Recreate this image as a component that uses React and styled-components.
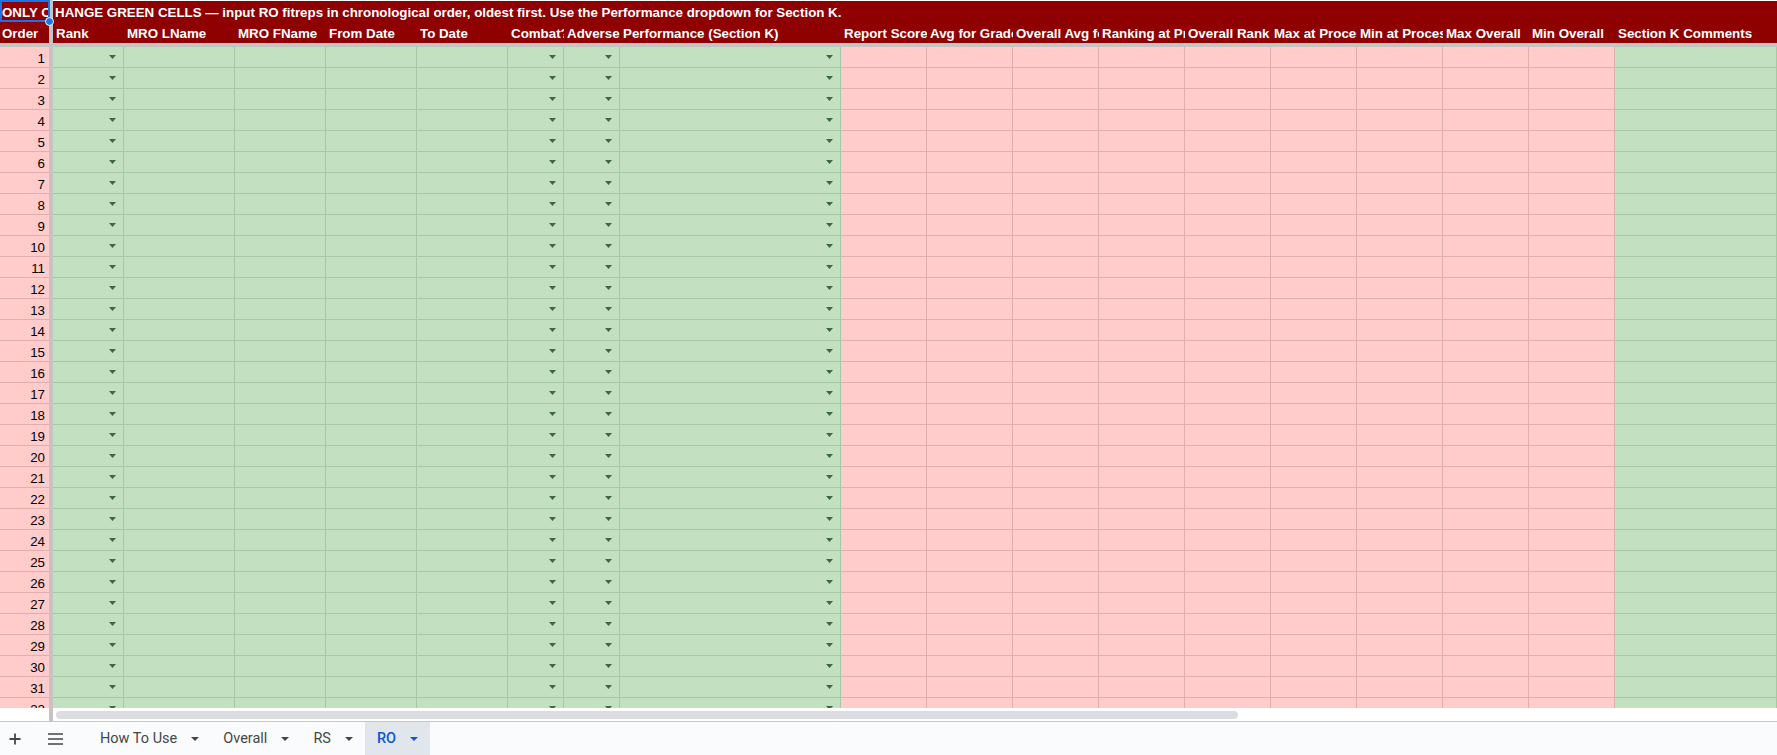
import styled, { createGlobalStyle } from "styled-components";

const GlobalStyle = createGlobalStyle`
  html, body {
    margin: 0;
    padding: 0;
    overflow: hidden;
    background: #ffffff;
  }
  * { box-sizing: border-box; }
`;

const RED = "#8f0000";
const GREEN = "#c3e0c1";
const GREEN_LINE = "#a6c8a3";
const PINK = "#ffcccb";
const PINK_LINE = "#e2adad";
const FREEZE = "#c4c4c4";

const COLUMNS = [
  { label: "Rank", tone: "green", dropdown: true },
  { label: "MRO LName", tone: "green" },
  { label: "MRO FName", tone: "green" },
  { label: "From Date", tone: "green" },
  { label: "To Date", tone: "green" },
  { label: "Combat?", tone: "green", dropdown: true },
  { label: "Adverse", tone: "green", dropdown: true },
  { label: "Performance (Section K)", tone: "green", dropdown: true },
  { label: "Report Score", tone: "pink" },
  { label: "Avg for Grade", tone: "pink" },
  { label: "Overall Avg for Grade", tone: "pink" },
  { label: "Ranking at Processing", tone: "pink" },
  { label: "Overall Rank", tone: "pink" },
  { label: "Max at Processing", tone: "pink" },
  { label: "Min at Processing", tone: "pink" },
  { label: "Max Overall", tone: "pink" },
  { label: "Min Overall", tone: "pink" },
  { label: "Section K Comments", tone: "green" },
];

const GRID =
  "49px 4px 71px 111px 91px 91px 91px 56px 56px 221px repeat(9, 86px) 1fr";

const ROWS = Array.from({ length: 32 }, (_, i) => i + 1);

const Page = styled.div`
  width: 1777px;
  height: 755px;
  display: flex;
  flex-direction: column;
  font-family: "Liberation Sans", Arial, sans-serif;
`;

const Sheet = styled.div`
  position: relative;
  height: 708px;
  overflow: hidden;
  flex-shrink: 0;
`;

const Row = styled.div`
  display: grid;
  grid-template-columns: ${GRID};
  height: ${(p) => p.$h}px;
`;

const FreezeBar = styled.div`
  background: ${FREEZE};
`;

const FreezeLine = styled.div`
  height: 4px;
  background: ${FREEZE};
`;

const HeadCell = styled.div`
  background: ${RED};
  color: #ffffff;
  font-size: 13.33px;
  font-weight: 700;
  line-height: 16px;
  white-space: nowrap;
  overflow: hidden;
  display: flex;
  align-items: flex-end;
  padding: 0 0 ${(p) => p.$pb || 0}px ${(p) => p.$pl ?? 3}px;
  border-top: ${(p) => (p.$top ? "1px solid #ffffff" : "none")};
`;

const TitleSpan = styled(HeadCell)`
  grid-column: 3 / -1;
`;

const OrderCell = styled.div`
  background: ${PINK};
  border-bottom: 1px solid ${PINK_LINE};
  font-size: 13.33px;
  line-height: 16px;
  color: #000000;
  display: flex;
  align-items: flex-end;
  justify-content: flex-end;
  padding-right: 4px;
  overflow: hidden;
`;

const DataCell = styled.div`
  background: ${(p) => (p.$tone === "pink" ? PINK : GREEN)};
  border-bottom: 1px solid ${(p) => (p.$tone === "pink" ? PINK_LINE : GREEN_LINE)};
  border-right: 1px solid ${(p) => (p.$tone === "pink" ? PINK_LINE : GREEN_LINE)};
  display: flex;
  justify-content: flex-end;
  align-items: flex-start;
  padding: 8px 7px 0 0;
`;

const Selection = styled.div`
  position: absolute;
  left: 0;
  top: 0;
  width: 50px;
  height: 22px;
  border: 2px solid #1a73e8;
  pointer-events: none;
`;

const Handle = styled.div`
  position: absolute;
  right: -6px;
  bottom: -6px;
  width: 9px;
  height: 9px;
  border-radius: 50%;
  background: #1a73e8;
  border: 1px solid #ffffff;
`;

const ScrollRow = styled.div`
  display: grid;
  grid-template-columns: 49px 4px 1fr;
  height: 13px;
  background: #ffffff;
  flex-shrink: 0;
`;

const ScrollTrack = styled.div`
  padding: 3px 0 0 3px;
`;

const ScrollThumb = styled.div`
  width: 1182px;
  height: 8px;
  border-radius: 4px;
  background: #dadce0;
`;

const TabBar = styled.div`
  flex: 1;
  display: flex;
  align-items: stretch;
  background: #f9fbfd;
  border-top: 1px solid #c4c7c5;
  font-family: Roboto, "Liberation Sans", sans-serif;
  font-size: 14.5px;
  color: #444746;
`;

const IconButton = styled.div`
  width: 30px;
  display: flex;
  align-items: center;
  justify-content: center;
  margin-left: ${(p) => p.$ml || 0}px;
  color: #444746;
`;

const Tabs = styled.div`
  display: flex;
  margin-left: 18px;
`;

const Tab = styled.div`
  display: flex;
  align-items: center;
  gap: 14px;
  padding: 0 12px 0 12px;
  background: ${(p) => (p.$active ? "#e1e6ed" : "transparent")};
  color: ${(p) => (p.$active ? "#0b57d0" : "#444746")};
  font-weight: ${(p) => (p.$active ? 500 : 400)};
`;

const DropArrow = () => (
  <svg width="7" height="4" viewBox="0 0 7 4">
    <path d="M0 0h7L3.5 4z" fill="#3d6a3d" />
  </svg>
);

const Caret = () => (
  <svg width="8" height="4" viewBox="0 0 8 4">
    <path d="M0 0h8L4 4z" fill="currentColor" />
  </svg>
);

const PlusIcon = () => (
  <svg width="14" height="14" viewBox="0 0 14 14">
    <path d="M7 1.5v11M1.5 7h11" stroke="currentColor" strokeWidth="1.8" fill="none" />
  </svg>
);

const MenuIcon = () => (
  <svg width="15" height="12" viewBox="0 0 15 12">
    <path d="M0 1h15M0 6h15M0 11h15" stroke="currentColor" strokeWidth="1.5" fill="none" />
  </svg>
);

const TABS = ["How To Use", "Overall", "RS", "RO"];

export default function App() {
  return (
    <>
      <GlobalStyle />
      <Page>
        <Sheet>
          <Row $h={21}>
            <HeadCell $top $pl={2}>ONLY CHANGE GREEN CELLS</HeadCell>
            <FreezeBar />
            <TitleSpan $top $pl={2}>
              HANGE GREEN CELLS — input RO fitreps in chronological order, oldest first. Use the Performance dropdown for Section K.
            </TitleSpan>
          </Row>
          <Row $h={22}>
            <HeadCell $pl={2} $pb={1}>Order</HeadCell>
            <FreezeBar />
            {COLUMNS.map((c) => (
              <HeadCell key={c.label} $pb={1}>
                {c.label}
              </HeadCell>
            ))}
          </Row>
          <FreezeLine />
          {ROWS.map((n) => (
            <Row key={n} $h={21}>
              <OrderCell>{n}</OrderCell>
              <FreezeBar />
              {COLUMNS.map((c) => (
                <DataCell key={c.label} $tone={c.tone}>
                  {c.dropdown && <DropArrow />}
                </DataCell>
              ))}
            </Row>
          ))}
          <Selection>
            <Handle />
          </Selection>
        </Sheet>
        <ScrollRow>
          <div />
          <FreezeBar />
          <ScrollTrack>
            <ScrollThumb />
          </ScrollTrack>
        </ScrollRow>
        <TabBar>
          <IconButton>
            <PlusIcon />
          </IconButton>
          <IconButton $ml={10}>
            <MenuIcon />
          </IconButton>
          <Tabs>
            {TABS.map((t) => (
              <Tab key={t} $active={t === "RO"}>
                {t}
                <Caret />
              </Tab>
            ))}
          </Tabs>
        </TabBar>
      </Page>
    </>
  );
}
